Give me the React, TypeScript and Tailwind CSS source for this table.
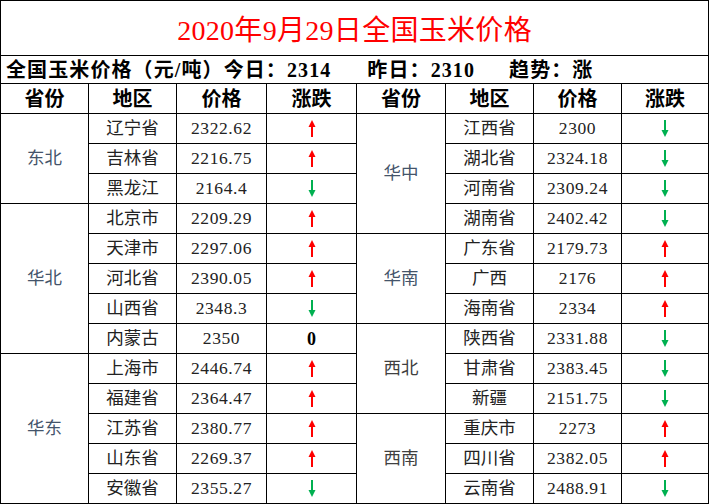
import React from 'react';

type Trend = 'up' | 'down' | 'flat';

interface Region {
  name: string;
  color: string;
  rows: [string, string, Trend][];
}

const leftRegions: Region[] = [
  {
    name: '东北',
    color: 'text-[#44546a]',
    rows: [
      ['辽宁省', '2322.62', 'up'],
      ['吉林省', '2216.75', 'up'],
      ['黑龙江', '2164.4', 'down'],
    ],
  },
  {
    name: '华北',
    color: 'text-[#44546a]',
    rows: [
      ['北京市', '2209.29', 'up'],
      ['天津市', '2297.06', 'up'],
      ['河北省', '2390.05', 'up'],
      ['山西省', '2348.3', 'down'],
      ['内蒙古', '2350', 'flat'],
    ],
  },
  {
    name: '华东',
    color: 'text-[#44546a]',
    rows: [
      ['上海市', '2446.74', 'up'],
      ['福建省', '2364.47', 'up'],
      ['江苏省', '2380.77', 'up'],
      ['山东省', '2269.37', 'up'],
      ['安徽省', '2355.27', 'down'],
    ],
  },
];

const rightRegions: Region[] = [
  {
    name: '华中',
    color: 'text-[#44546a]',
    rows: [
      ['江西省', '2300', 'down'],
      ['湖北省', '2324.18', 'down'],
      ['河南省', '2309.24', 'down'],
      ['湖南省', '2402.42', 'down'],
    ],
  },
  {
    name: '华南',
    color: 'text-[#44546a]',
    rows: [
      ['广东省', '2179.73', 'up'],
      ['广西', '2176', 'up'],
      ['海南省', '2334', 'up'],
    ],
  },
  {
    name: '西北',
    color: 'text-[#404040]',
    rows: [
      ['陕西省', '2331.88', 'down'],
      ['甘肃省', '2383.45', 'down'],
      ['新疆', '2151.75', 'down'],
    ],
  },
  {
    name: '西南',
    color: 'text-[#404040]',
    rows: [
      ['重庆市', '2273', 'up'],
      ['四川省', '2382.05', 'up'],
      ['云南省', '2488.91', 'down'],
    ],
  },
];

interface FlatRow {
  region?: Region;
  city: string;
  price: string;
  trend: Trend;
}

// one entry per table row, the region only on its first row (rowSpan)
function flatten(regions: Region[]): FlatRow[] {
  const out: FlatRow[] = [];
  regions.forEach((r) => {
    r.rows.forEach(([city, price, trend], i) => {
      out.push({ region: i === 0 ? r : undefined, city, price, trend });
    });
  });
  return out;
}

function TrendMark({ trend }: { trend: Trend }) {
  if (trend === 'flat') {
    return <span className="font-bold text-[18px] text-black">0</span>;
  }
  if (trend === 'up') {
    return (
      <svg width="8" height="17" viewBox="0 0 8 17" className="inline-block align-middle">
        <polygon points="4,0 0.5,7 7.5,7" fill="#ff0000" />
        <rect x="3" y="6" width="2" height="11" fill="#ff0000" />
      </svg>
    );
  }
  return (
    <svg width="8" height="17" viewBox="0 0 8 17" className="inline-block align-middle">
      <rect x="3" y="0" width="2" height="11" fill="#00b050" />
      <polygon points="4,17 0.5,10 7.5,10" fill="#00b050" />
    </svg>
  );
}

const cell = 'border border-black text-center p-0';

function HalfCells({ row }: { row: FlatRow }) {
  return (
    <>
      {row.region && (
        <td rowSpan={row.region.rows.length} className={`${cell} text-[17.5px] ${row.region.color}`}>
          {row.region.name}
        </td>
      )}
      <td className={`${cell} text-[17.5px] text-[#222]`}>{row.city}</td>
      <td className={`${cell} text-[17.5px] text-[#222] tracking-[0.6px]`}>{row.price}</td>
      <td className={cell}>
        <TrendMark trend={row.trend} />
      </td>
    </>
  );
}

export default function App() {
  const left = flatten(leftRegions);
  const right = flatten(rightRegions);
  const heads = ['省份', '地区', '价格', '涨跌', '省份', '地区', '价格', '涨跌'];

  return (
    <div className="w-[709px] h-[504px] bg-white overflow-hidden font-['Liberation_Serif','Noto_Sans_CJK_SC',serif] leading-none">
      <table className="w-[708px] table-fixed border-collapse">
        <colgroup>
          <col className="w-[88px]" />
          <col className="w-[88px]" />
          <col className="w-[90px]" />
          <col className="w-[90px]" />
          <col className="w-[89px]" />
          <col className="w-[88px]" />
          <col className="w-[88px]" />
          <col className="w-[87px]" />
        </colgroup>
        <tbody>
          <tr className="h-[55px]">
            <td colSpan={8} className={`${cell} text-[28px] text-[#ff0000] pt-[6px] tracking-[0.3px]`}>
              2020年9月29日全国玉米价格
            </td>
          </tr>
          <tr className="h-[28px]">
            <td colSpan={8} className="border border-black p-0 pl-[5px] text-left text-[20px] font-bold text-black tracking-[1.1px]">
              <span>全国玉米价格（元/吨）今日：2314</span>
              <span className="ml-[36px]">昨日：2310</span>
              <span className="ml-[34px]">趋势：涨</span>
            </td>
          </tr>
          <tr className="h-[30px]">
            {heads.map((h, i) => (
              <td key={i} className={`${cell} text-[20px] font-bold text-black`}>
                {h}
              </td>
            ))}
          </tr>
          {left.map((row, i) => (
            <tr key={i} className="h-[30px]">
              <HalfCells row={row} />
              <HalfCells row={right[i]} />
            </tr>
          ))}
        </tbody>
      </table>
    </div>
  );
}
